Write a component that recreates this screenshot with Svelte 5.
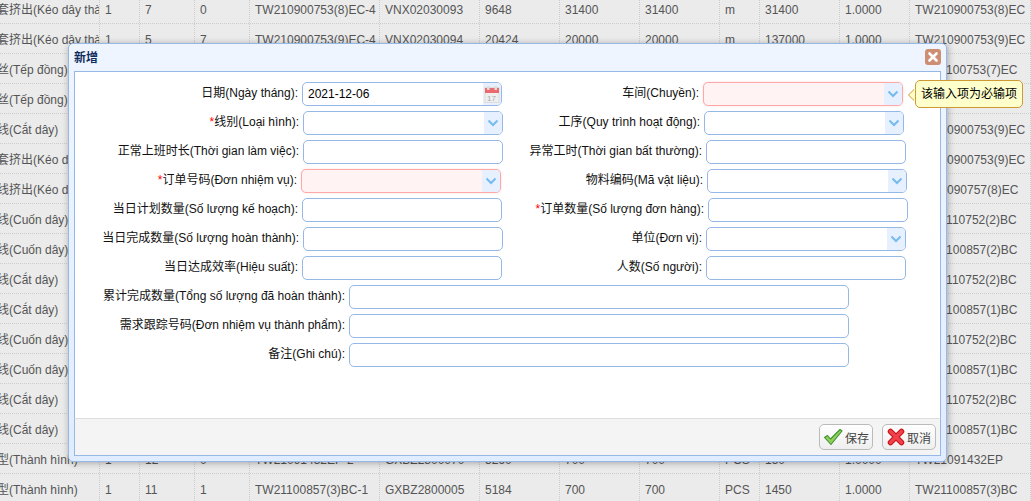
<script>
    const cols = [100, 40, 55, 55, 130, 100, 80, 80, 80, 40, 80, 70, 121];
    const bg = [
        ['套挤出(Kéo dây thà', '1', '7', '0', 'TW210900753(8)EC-4', 'VNX02030093', '9648', '31400', '31400', 'm', '31400', '1.0000', 'TW210900753(8)EC'],
        ['套挤出(Kéo dây thà', '1', '5', '7', 'TW210900753(9)EC-4', 'VNX02030094', '20424', '20000', '20000', 'm', '137000', '1.0000', 'TW210900753(9)EC'],
        ['丝(Tếp đồng)', '', '', '', '', '', '', '', '', '', '', '', 'TW21100753(7)EC'],
        ['丝(Tếp đồng)', '', '', '', '', '', '', '', '', '', '', '', 'TW21100753(7)EC'],
        ['线(Cắt dây)', '', '', '', '', '', '', '', '', '', '', '', 'TW210900753(9)EC'],
        ['套挤出(Kéo dây thà', '', '', '', '', '', '', '', '', '', '', '', 'TW210900753(9)EC'],
        ['线挤出(Kéo dây thà', '', '', '', '', '', '', '', '', '', '', '', 'TW21090757(8)EC'],
        ['线(Cuốn dây)', '', '', '', '', '', '', '', '', '', '', '', 'TW21110752(2)BC'],
        ['线(Cuốn dây)', '', '', '', '', '', '', '', '', '', '', '', 'TW21100857(2)BC'],
        ['线(Cắt dây)', '', '', '', '', '', '', '', '', '', '', '', 'TW21110752(2)BC'],
        ['线(Cắt dây)', '', '', '', '', '', '', '', '', '', '', '', 'TW21100857(1)BC'],
        ['线(Cuốn dây)', '', '', '', '', '', '', '', '', '', '', '', 'TW21110752(2)BC'],
        ['线(Cuốn dây)', '', '', '', '', '', '', '', '', '', '', '', 'TW21100857(1)BC'],
        ['线(Cắt dây)', '', '', '', '', '', '', '', '', '', '', '', 'TW21110752(2)BC'],
        ['线(Cắt dây)', '', '', '', '', '', '', '', '', '', '', '', 'TW21100857(1)BC'],
        ['型(Thành hình)', '1', '12', '0', 'TW21091432EP-2', 'GXBZ2800070', '5260', '700', '700', 'PCS', '150', '1.0000', 'TW21091432EP'],
        ['型(Thành hình)', '1', '11', '1', 'TW21100857(3)BC-1', 'GXBZ2800005', '5184', '700', '700', 'PCS', '1450', '1.0000', 'TW21100857(3)BC']
    ];

    // label column widths follow the uneven field offsets of the form
    const rows = [
        { a: { text: '日期(Ngày tháng):', w: 227, value: '2021-12-06', type: 'date' }, b: { text: '车间(Chuyền):', w: 201, type: 'combo', bad: true } },
        { a: { text: '线别(Loại hình):', w: 228, req: true, type: 'combo' }, b: { text: '工序(Quy trình hoạt động):', w: 201, type: 'combo' } },
        { a: { text: '正常上班时长(Thời gian làm việc):', w: 228 }, b: { text: '异常工时(Thời gian bất thường):', w: 203 } },
        { a: { text: '订单号码(Đơn nhiệm vụ):', w: 226, req: true, type: 'combo', bad: true }, b: { text: '物料编码(Mã vật liệu):', w: 206, type: 'combo' } },
        { a: { text: '当日计划数量(Số lượng kế hoạch):', w: 227 }, b: { text: '订单数量(Số lượng đơn hàng):', w: 206, req: true } },
        { a: { text: '当日完成数量(Số lượng hoàn thành):', w: 228 }, b: { text: '单位(Đơn vị):', w: 203, type: 'combo' } },
        { a: { text: '当日达成效率(Hiệu suất):', w: 227 }, b: { text: '人数(Số người):', w: 204 } }
    ];
    const wide = ['累计完成数量(Tổng số lượng đã hoàn thành):', '需求跟踪号码(Đơn nhiệm vụ thành phẩm):', '备注(Ghi chú):'];
</script>

<div class="page">
    <div class="sheet">
        {#each bg as row}
            <div class="tr">
                {#each row as cell, i}
                    <div class="td" class:first={i == 0} style="width:{cols[i]}px">{cell}</div>
                {/each}
            </div>
        {/each}
    </div>

    <div class="win">
        <div class="win-head">
            <span class="win-title">新增</span>
            <span class="win-close">
                <svg width="16" height="16" viewBox="0 0 16 16"><path d="M4.5 4.5l7 7M11.5 4.5l-7 7" stroke="#fff" stroke-width="2.6" stroke-linecap="round"/></svg>
            </span>
        </div>
        <div class="win-body">
            <div class="form">
                {#each rows as r}
                    <div class="row">
                        {#each [r.a, r.b] as f}
                            <div class="lbl" style="width:{f.w}px">{#if f.req}<i>*</i>{/if}{f.text}</div>
                            <div class="field" class:bad={f.bad}>
                                <span class="val">{f.value || ''}</span>
                                {#if f.type == 'combo'}
                                    <span class="addon">
                                        <svg width="12" height="8" viewBox="0 0 12 8"><path d="M1.5 1.5L6 6l4.5-4.5" fill="none" stroke="#75bbf0" stroke-width="2"/></svg>
                                    </span>
                                {:else if f.type == 'date'}
                                    <span class="addon">
                                        <svg width="16" height="19" viewBox="0 0 16 19">
                                            <rect x="1" y="2.5" width="14" height="15" fill="#efefef" stroke="#dcdcdc"/>
                                            <rect x="1" y="3" width="14" height="5" fill="#ea6a70"/>
                                            <rect x="3" y="1" width="2.5" height="4" fill="#ddd"/>
                                            <rect x="10.5" y="1" width="2.5" height="4" fill="#ddd"/>
                                            <text x="3" y="16" font-size="8" font-family="Liberation Sans" fill="#aaa">17</text>
                                        </svg>
                                    </span>
                                {/if}
                            </div>
                        {/each}
                    </div>
                {/each}
                {#each wide as t}
                    <div class="row">
                        <div class="lbl" style="width:274px">{t}</div>
                        <div class="field long"></div>
                    </div>
                {/each}
            </div>
        </div>
        <div class="win-foot">
            <button class="btn">
                <svg width="20" height="18" viewBox="0 0 20 18"><path d="M1.5 9.5l3-2 3 3.5L17 1.5l2 1.5L8 16.5z" fill="#8fd05c" stroke="#3f9030" stroke-width="1.1" stroke-linejoin="round"/></svg>
                保存
            </button>
            <button class="btn">
                <svg width="18" height="18" viewBox="0 0 18 18"><path d="M3.5 3.5l11 11M14.5 3.5l-11 11" stroke="#c9141c" stroke-width="5.5" stroke-linecap="round"/><path d="M3.5 3.5l11 11M14.5 3.5l-11 11" stroke="#f0424a" stroke-width="3.2" stroke-linecap="round"/></svg>
                取消
            </button>
        </div>
    </div>

    <div class="tip">
        <span class="tip-arrow"></span>
        该输入项为必输项
    </div>
</div>

<style>
    :global(body) {
        margin: 0;
        overflow: hidden;
    }

    .page {
        position: relative;
        width: 1031px;
        height: 501px;
        overflow: hidden;
        background: #ebebeb;
        font: 12px "Liberation Sans", "Noto Sans CJK SC", sans-serif;
        color: #000;
    }

    .sheet {
        margin-top: -6px;
    }

    .tr {
        display: flex;
        height: 30px;
        box-sizing: border-box;
        border-bottom: 1px dotted #ccc;
    }

    .td {
        box-sizing: border-box;
        flex: none;
        padding: 1px 0 0 5px;
        line-height: 31px;
        white-space: nowrap;
        overflow: hidden;
        color: #555;
        border-right: 1px dotted #ccc;
    }

    .td.first {
        padding-left: 0;
        text-indent: -3px;
    }

    .win {
        position: absolute;
        left: 68px;
        top: 43px;
        width: 879px;
        height: 419px;
        box-sizing: border-box;
        display: flex;
        flex-direction: column;
        padding: 0 5px 5px;
        background: linear-gradient(#eff5ff, #e0ecff);
        border: 1px solid #95b8e7;
        border-radius: 5px;
        box-shadow: 1px 1px 7px rgba(0, 0, 0, 0.3);
    }

    .win-head {
        height: 27px;
        box-sizing: border-box;
        padding-bottom: 2px;
        flex: none;
        display: flex;
        align-items: center;
        justify-content: space-between;
    }

    .win-title {
        font-weight: bold;
        color: #0e2d5f;
    }

    .win-close {
        display: flex;
        align-items: center;
        justify-content: center;
        width: 16px;
        height: 16px;
        background: #cd8e74;
        border-radius: 3px;
    }

    .win-body {
        flex: 1;
        background: #fff;
        border: 1px solid #95b8e7;
        border-bottom: 0;
    }

    .form {
        padding-top: 10px;
    }

    .row {
        display: flex;
        height: 24px;
        margin-bottom: 5px;
    }

    .lbl {
        flex: none;
        box-sizing: border-box;
        padding-right: 4px;
        text-align: right;
        line-height: 23px;
        white-space: nowrap;
        color: #111;
    }

    .lbl i {
        color: #f00;
        font-style: normal;
    }

    .field {
        flex: none;
        box-sizing: border-box;
        width: 200px;
        height: 24px;
        display: flex;
        align-items: center;
        justify-content: space-between;
        border: 1px solid #95b8e7;
        border-radius: 5px;
        overflow: hidden;
        background: #fff;
    }

    .field.long {
        width: 500px;
    }

    .field.bad {
        background: #fff3f3;
        border-color: #ffa8a8;
        box-shadow: 0 0 2px #ffd5d5;
    }

    .val {
        padding-left: 5px;
        color: #000;
    }

    .addon {
        width: 18px;
        height: 100%;
        display: flex;
        align-items: center;
        justify-content: center;
        background: #e7f0ff;
    }

    .win-foot {
        flex: none;
        height: 38px;
        box-sizing: border-box;
        display: flex;
        justify-content: flex-end;
        gap: 9px;
        padding: 5px 4px 0 0;
        background: #f4f4f4;
        border: 1px solid #95b8e7;
        border-top: 1px solid #ddd;
    }

    .btn {
        width: 54px;
        height: 26px;
        display: flex;
        align-items: center;
        justify-content: center;
        gap: 2px;
        padding: 0;
        font: inherit;
        color: #444;
        background: linear-gradient(#fff, #eee);
        border: 1px solid #bbb;
        border-radius: 5px;
    }

    .tip {
        position: absolute;
        left: 915px;
        top: 80px;
        box-sizing: border-box;
        width: 108px;
        height: 28px;
        line-height: 27px;
        padding-left: 5px;
        background: #ffc;
        border: 1px solid #c93;
        border-radius: 5px;
        color: #000;
        white-space: nowrap;
    }

    .tip-arrow {
        position: absolute;
        left: -7px;
        top: 8px;
        border: 6px solid transparent;
        border-left: 0;
        border-right-color: #ffc;
        filter: drop-shadow(-1px 0 0 #c93);
    }
</style>
